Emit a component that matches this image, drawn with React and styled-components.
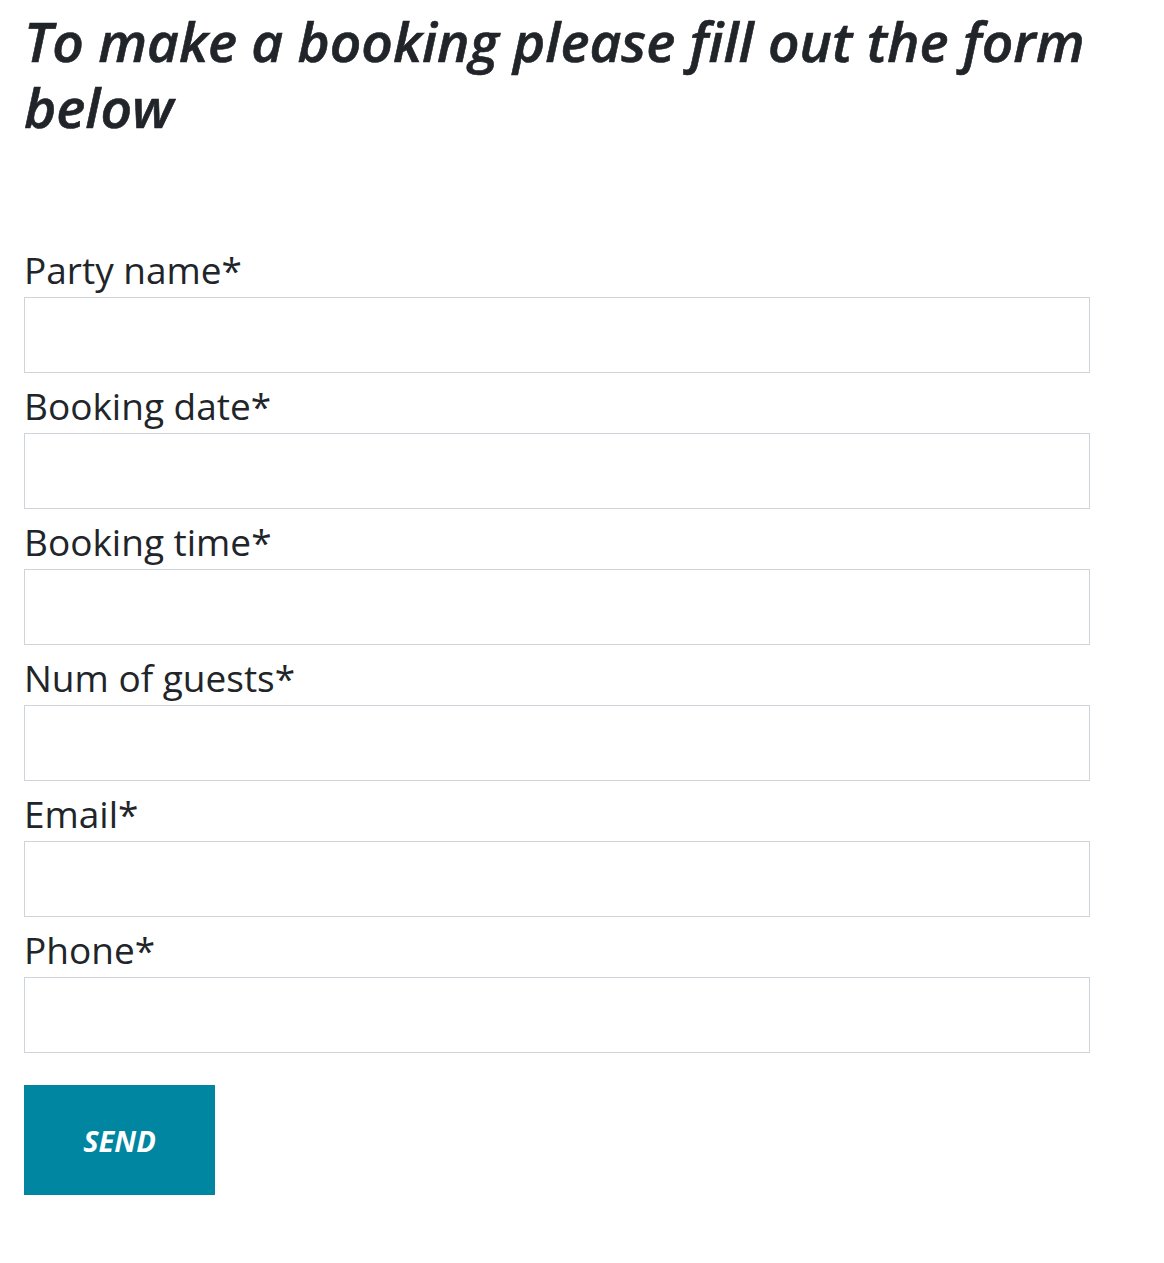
import React from 'react'
import { createGlobalStyle, styled } from 'styled-components'

const GlobalStyle = createGlobalStyle`
  body {
    margin: 0;
    background: #fff;
    color: #212529;
    font-family: "Segoe UI", "Open Sans", "Noto Sans", sans-serif;
  }
`

const Page = styled.div`
  padding: 8px 24px 0 24px;
  width: 1066px;
`

const Title = styled.h1`
  margin: 0 0 97px 0;
  font-family: "Open Sans", sans-serif;
  font-style: italic;
  font-weight: 600;
  font-size: 55px;
  line-height: 66px;
  color: #212529;
  -webkit-text-stroke: 0.6px #212529;
`

const Form = styled.form`
  display: flex;
  flex-direction: column;
`

const Label = styled.label`
  display: block;
  padding-top: 6px;
  font-size: 37px;
  line-height: 54px;
  color: #212529;
`

const Input = styled.input`
  display: block;
  box-sizing: border-box;
  width: 1066px;
  height: 76px;
  border: 1px solid #ced4da;
  outline: none;
  padding: 0 12px;
  font-size: 24px;
  font-family: inherit;
`

const SendButton = styled.button`
  margin-top: 32px;
  width: 191px;
  height: 110px;
  border: none;
  background: #0086a0;
  color: #fff;
  font-family: "Open Sans", sans-serif;
  font-style: italic;
  font-weight: 700;
  font-size: 29px;
  cursor: pointer;
`

const fields = ['Party name', 'Booking date', 'Booking time', 'Num of guests', 'Email', 'Phone']

export default function App() {
  return (
    <Page>
      <GlobalStyle />
      <Title>To make a booking please fill out the form below</Title>
      <Form onSubmit={e => e.preventDefault()}>
        {fields.map(f => (
          <div key={f}>
            <Label>{f}*</Label>
            <Input type="text" />
          </div>
        ))}
        <div>
          <SendButton type="submit">SEND</SendButton>
        </div>
      </Form>
    </Page>
  )
}
